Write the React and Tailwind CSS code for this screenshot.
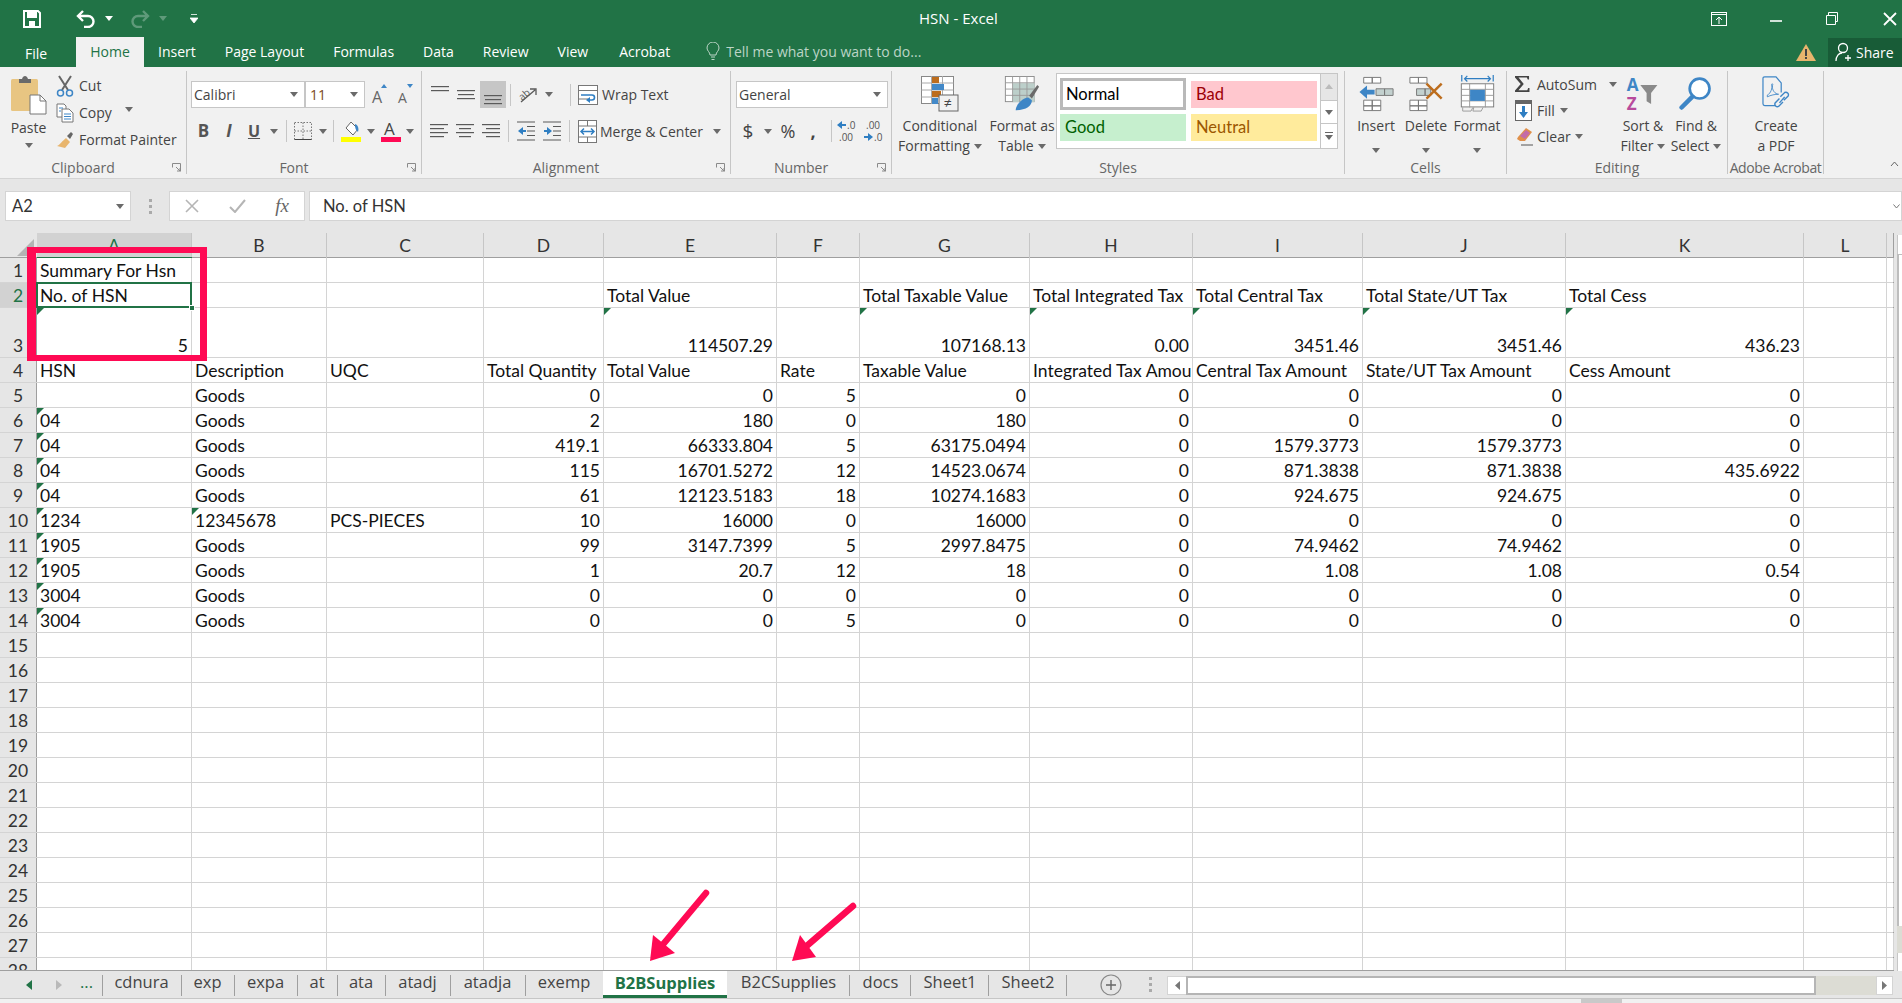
import React from 'react';

const G = '#217346';
const Caret = ({ c = '#6a6a6a' }) => (
  <svg width="8" height="5" viewBox="0 0 8 5" className="shrink-0"><path d="M0 0h8L4 5z" fill={c} /></svg>
);
const Slot = ({ w, children }) => <div className={`${w} h-full flex items-center justify-center shrink-0`}>{children}</div>;
const VSep = () => <div className="w-px h-[22px] bg-[#c6c6c6] shrink-0" />;

const Lines = ({ kind = 'left' }) => {
  const rows = [[0, 18], [kind === 'left' ? 0 : kind === 'center' ? 3 : 4, kind === 'left' ? 14 : kind === 'center' ? 15 : 18], [0, 18], [kind === 'left' ? 0 : kind === 'center' ? 3 : 4, kind === 'left' ? 14 : kind === 'center' ? 15 : 18]];
  return (
    <svg width="18" height="14" viewBox="0 0 18 14">
      {rows.map((r, i) => <rect key={i} x={r[0]} y={i * 4} width={r[1] - r[0]} height="1.2" fill="#5a5a5a" />)}
    </svg>
  );
};
const VAlign = ({ pos }) => {
  const ys = pos === 'top' ? [2, 6] : pos === 'mid' ? [6, 10, 14] : [11, 15, 19];
  return (
    <svg width="20" height="22" viewBox="0 0 20 22">
      {ys.map((y, i) => <rect key={y} x={i === 1 && pos !== 'top' ? 2 : 1} y={y} width={i === 1 && pos !== 'top' ? 16 : 18} height="1.2" fill="#5a5a5a" />)}
    </svg>
  );
};

const Scissors = () => (
  <svg width="18" height="22" viewBox="0 0 18 22">
    <path d="M3 1l9 14M15 1L6 15" stroke="#666" strokeWidth="2" fill="none" />
    <circle cx="4.5" cy="18" r="3" fill="none" stroke="#3e86c6" strokeWidth="1.5" />
    <circle cx="13.5" cy="18" r="3" fill="none" stroke="#3e86c6" strokeWidth="1.5" />
  </svg>
);
const CopyIco = () => (
  <svg width="18" height="20" viewBox="0 0 18 20">
    <path d="M1 1h7l2 2v11H1z" fill="#fff" stroke="#777" />
    <path d="M6 6h7l4 4v9H6z" fill="#fff" stroke="#777" />
    <path d="M3 5h4M3 8h2M8 11h7M8 13.5h7M8 16h7" stroke="#3e86c6" />
  </svg>
);
const Painter = () => (
  <svg width="18" height="18" viewBox="0 0 18 18">
    <path d="M10 7l4 4-5 6-8-2c3-1 5-5 9-8z" fill="#e8b56d" />
    <path d="M11 5l4-4 2 2-3 5z" fill="#666" />
  </svg>
);
const PasteIco = () => (
  <svg width="36" height="40" viewBox="0 0 36 40">
    <rect x="0" y="4" width="27" height="32" rx="1.5" fill="#e8c582" />
    <path d="M8 4h3c1-4 5-4 6 0h3v4H8z" fill="#6a6a6a" />
    <path d="M19 20h10l6 6v13H19z" fill="#fff" stroke="#777" />
    <path d="M29 20v6h6" fill="none" stroke="#777" />
  </svg>
);
const Wrap = () => (
  <svg width="20" height="20" viewBox="0 0 20 20">
    <rect x=".5" y=".5" width="19" height="19" fill="#fff" stroke="#777" />
    <path d="M.5 5.5h19M.5 14h10" stroke="#777" />
    <path d="M3 10h11a2.500 2.500 0 0 1 0 5h-3" stroke="#2f7ec2" strokeWidth="1.6" fill="none" />
    <path d="M12 12v6l-4-3z" fill="#2f7ec2" />
  </svg>
);
const Merge = () => (
  <svg width="19" height="23" viewBox="0 0 19 23">
    <rect x=".5" y=".5" width="18" height="22" fill="#fff" stroke="#777" />
    <path d="M.5 6h18M.5 17h18M9.500 .5V6M9.500 17v5.500" stroke="#777" />
    <path d="M3 11.500h13M6 8.500l-3 3 3 3M13 8.500l3 3-3 3" stroke="#2f7ec2" strokeWidth="1.5" fill="none" />
  </svg>
);
const Indent = ({ rev }) => (
  <svg width="18" height="20" viewBox="0 0 18 20">
    <path d="M0 1h18M0 19h18M10 5.500h8M10 10h8M10 14.500h8" stroke="#5a5a5a" strokeWidth="1.2" />
    {rev ? <path d="M1 10l5-4v3h3v2H6v3z" fill="#2f7ec2" /> : <path d="M9 10L4 6v3H1v2h3v3z" fill="#2f7ec2" />}
  </svg>
);
const Orient = () => (
  <svg width="20" height="20" viewBox="0 0 20 20">
    <text x="1" y="12" fontSize="10" fill="#5a5a5a" transform="rotate(-40 8 10)" fontFamily="Open Sans">ab</text>
    <path d="M3 17L17 5M12 4h6v6" stroke="#5a5a5a" strokeWidth="1.3" fill="none" />
  </svg>
);
const Dec = ({ up }) => (
  <svg width="22" height="24" viewBox="0 0 22 24">
    {up ? <>
      <path d="M1 6l5-4v3h4v2H6v3z" fill="#2f7ec2" />
      <text x="11" y="10" fontSize="10" fill="#555" fontFamily="Open Sans">.0</text>
      <text x="3" y="22" fontSize="10" fill="#555" fontFamily="Open Sans">.00</text>
    </> : <>
      <text x="4" y="10" fontSize="10" fill="#555" fontFamily="Open Sans">.00</text>
      <path d="M11 18l-5-4v3H2v2h4v3z" fill="#2f7ec2" />
      <text x="12" y="22" fontSize="10" fill="#555" fontFamily="Open Sans">.0</text>
    </>}
  </svg>
);
const CondFmt = () => (
  <svg width="38" height="36" viewBox="0 0 38 36">
    <rect x=".5" y=".5" width="32" height="27" fill="#fff" stroke="#888" />
    <path d="M.5 7h32M.5 14h32M.5 21h32M10.500 0v28M21.500 0v28" stroke="#aaa" />
    <rect x="11" y="1" width="7" height="6" fill="#bd6d1d" />
    <rect x="11" y="8" width="12" height="6" fill="#4389c8" />
    <rect x="11" y="15" width="9" height="6" fill="#bd6d1d" />
    <rect x="11" y="22" width="6" height="6" fill="#4389c8" />
    <rect x="18" y="19" width="19" height="16" fill="#f1f1f1" stroke="#666" />
    <text x="23" y="32" fontSize="14" fill="#444" fontFamily="Open Sans">≠</text>
  </svg>
);
const FmtTable = () => (
  <svg width="36" height="36" viewBox="0 0 38 40">
    <rect x=".5" y=".5" width="32" height="28" fill="#fff" stroke="#888" />
    <rect x="9" y="8" width="24" height="21" fill="#bccfca" />
    <path d="M.5 7.500h32M.5 14.500h32M.5 21.500h32M8.500 0v29M16.500 0v29M24.500 0v29" stroke="#999" />
    <path d="M27 22L36 10l2 2-8 13z" fill="#6a6a6a" />
    <path d="M12 38c0-6 8-14 14-14l4 3c0 6-6 11-18 11z" fill="#3e86c6" />
  </svg>
);
const InsertIco = () => (
  <svg width="35" height="36" viewBox="0 0 36 38">
    <g fill="#fff" stroke="#777"><path d="M4.500 1.500h9v6h-9zM13.500 1.500h9v6h-9zM4.500 25.500h9v6h-9zM13.500 25.500h9v6h-9zM4.500 31.500h9v5h-9zM13.500 31.500h9v5h-9z" /></g>
    <g fill="#c3d1cf" stroke="#777"><path d="M17.500 13.500h9v7h-9zM26.500 13.500h9v7h-9z" /></g>
    <path d="M0 17l8-7v4.500h8v5H8V24z" fill="#3e86c6" />
  </svg>
);
const DeleteIco = () => (
  <svg width="35" height="36" viewBox="0 0 36 38">
    <g fill="#fff" stroke="#777"><path d="M.5 1.500h9v6h-9zM9.500 1.500h9v6h-9zM.5 25.500h9v6h-9zM9.500 25.500h9v6h-9zM.5 31.500h9v5h-9zM9.500 31.500h9v5h-9z" /></g>
    <g fill="#c3d1cf" stroke="#777"><path d="M7.500 13.500h9v7h-9zM16.500 13.500h6v7h-6z" /></g>
    <path d="M18 8l16 16M34 8L18 24" stroke="#bd6d1d" strokeWidth="2.600" />
  </svg>
);
const FormatIco = () => (
  <svg width="35" height="37" viewBox="0 0 36 40">
    <path d="M4 4h28M7 1l-3 3 3 3M29 1l3 3-3 3M1 0v7M35 0v7" stroke="#2f7ec2" strokeWidth="1.3" fill="none" />
    <rect x=".5" y="9.500" width="35" height="25" fill="#fff" stroke="#777" />
    <path d="M.5 15.500h35M.5 22h35M.5 28h35M9.500 9v26M26.500 9v26" stroke="#999" />
    <rect x="10" y="16" width="16" height="12" fill="#3e86c6" />
    <path d="M2 35v4h9l2-4M14 35l-1 4h9l2-4" fill="none" stroke="#999" />
  </svg>
);
const Sigma = () => (
  <svg width="17" height="18" viewBox="0 0 17 18"><path d="M0 0h16v4h-1.500l-1-2.500H4l6 7.500-6 7h10l1-2.500H16.500V18H0v-1.500L6.500 9 0 1.500z" fill="#444" /></svg>
);
const FillIco = () => (
  <svg width="17" height="21" viewBox="0 0 17 21">
    <rect x=".5" y=".5" width="16" height="20" fill="#fff" stroke="#666" />
    <rect x="0" y="0" width="17" height="4" fill="#666" />
    <path d="M7 6h3v6h3l-4.500 6L4 12h3z" fill="#2f7ec2" />
  </svg>
);
const ClearIco = () => (
  <svg width="18" height="19" viewBox="0 0 18 19">
    <path d="M3 10l8-9 6 4-7 9H5l-3-2z" fill="#e0904a" />
    <path d="M5 9l6-6 4 3-5 6z" fill="#c36ca8" />
    <path d="M6 18h12" stroke="#555" />
  </svg>
);
const SortIco = () => (
  <svg width="36" height="36" viewBox="0 0 36 40">
    <text x="0" y="17" fontSize="19" fontWeight="700" fill="#3e86c6" fontFamily="Open Sans">A</text>
    <text x="0" y="38" fontSize="19" fontWeight="700" fill="#b84a9c" fontFamily="Open Sans">Z</text>
    <path d="M15 10h19l-7 9v12l-5-3v-9z" fill="#8a8a8a" />
  </svg>
);
const FindIco = () => (
  <svg width="34" height="36" viewBox="0 0 36 40">
    <circle cx="22" cy="14" r="11" fill="#fff" stroke="#3e86c6" strokeWidth="3" />
    <path d="M14 23L2 35" stroke="#3e86c6" strokeWidth="5" strokeLinecap="round" />
  </svg>
);
const PdfIco = () => (
  <svg width="30" height="33" viewBox="0 0 32 38" className="mb-[3px]">
    <path d="M1 3q0-2 2-2h13l6 7v11M1 3v29q0 2 2 2h12" fill="none" stroke="#3e86c6" strokeWidth="1.4" />
    <path d="M6 22c4-2 6-8 5-12 0-2 2-1 1 1-1 5 3 10 7 10-4 0-9 1-13 3z" fill="none" stroke="#3e86c6" />
    <path d="M21 24l5-5a3 3 0 0 1 4 4l-5 5M24 30l-5 5a3 3 0 0 1-4-4l5-5M20 31l6-7" fill="none" stroke="#3e86c6" strokeWidth="1.600" />
  </svg>
);
const Launcher = () => (
  <svg width="9" height="9" viewBox="0 0 9 9" className="shrink-0"><path d="M.5.5h8v8M.5.5v4M4 4l4 4M5 8h3V5" fill="none" stroke="#8a8a8a" /></svg>
);

const Group = ({ w, label, launch, labelClass = '', children }) => (
  <div className={`${w} h-[103px] mt-[4px] border-r border-[#c6c6c6] flex flex-col shrink-0`}>
    <div className="h-[90px]">{children}</div>
    <div className={`h-[13px] relative flex items-center justify-center text-[#666] text-[14px] leading-none whitespace-nowrap ${launch ? 'pr-[20px]' : ''} ${labelClass}`}>
      {label}
      {launch && <div className="absolute right-[5px] top-[2px]"><Launcher /></div>}
    </div>
  </div>
);
const BigBtn = ({ w, icon, l1, l2, caret }) => (
  <div className={`${w} flex flex-col items-center shrink-0 leading-none`}>
    <div className="h-[41px] flex items-end justify-center">{icon}</div>
    <div className="mt-[4px] h-[20px] flex items-center whitespace-nowrap">{l1}</div>
    <div className="h-[20px] flex items-center gap-[4px] whitespace-nowrap">{l2}{caret && <Caret />}</div>
  </div>
);
const Box = ({ w, children, caret }) => (
  <div className={`${w} h-[27px] bg-white border border-[#c6c6c6] flex items-center justify-between pl-[2px] pr-[6px] shrink-0`}>
    <span>{children}</span>{caret && <Caret />}
  </div>
);

const TABS = [
  ['cdnura', 'w-[79px]'], ['exp', 'w-[53px]'], ['expa', 'w-[63px]'], ['at', 'w-[40px]'], ['ata', 'w-[48px]'],
  ['atadj', 'w-[65px]'], ['atadja', 'w-[75px]'], ['exemp', 'w-[78px]'],
];
const TABS2 = [['B2CSupplies', 'w-[123px]'], ['docs', 'w-[61px]'], ['Sheet1', 'w-[78px]'], ['Sheet2', 'w-[78px]']];
const COLS = ['A', 'B', 'C', 'D', 'E', 'F', 'G', 'H', 'I', 'J', 'K', 'L', ''];
const rowGrid = 'grid grid-cols-[37px_155px_135px_157px_120px_173px_83px_170px_163px_170px_203px_238px_83px_7px]';

const L = (t, m) => ({ t, m });
const R = (t, m) => ({ t, r: true, m });
const blank = {};
const dataRow = (a, b, c, vals) => [a, L(b, b === '12345678'), L(c), ...vals.map((v) => R(v))];
const ROWS = {
  1: [L('Summary For Hsn')],
  2: [L('No. of HSN'), blank, blank, blank, L('Total Value'), blank, L('Total Taxable Value'), L('Total Integrated Tax'), L('Total Central Tax'), L('Total State/UT Tax'), L('Total Cess')],
  3: [R('5', true), blank, blank, blank, R('114507.29', true), blank, R('107168.13', true), R('0.00', true), R('3451.46', true), R('3451.46', true), R('436.23', true)],
  4: [L('HSN'), L('Description'), L('UQC'), L('Total Quantity'), L('Total Value'), L('Rate'), L('Taxable Value'), L('Integrated Tax Amount'), L('Central Tax Amount'), L('State/UT Tax Amount'), L('Cess Amount')],
  5: dataRow(L(''), 'Goods', '', ['0', '0', '5', '0', '0', '0', '0', '0']),
  6: dataRow(L('04', true), 'Goods', '', ['2', '180', '0', '180', '0', '0', '0', '0']),
  7: dataRow(L('04', true), 'Goods', '', ['419.1', '66333.804', '5', '63175.0494', '0', '1579.3773', '1579.3773', '0']),
  8: dataRow(L('04', true), 'Goods', '', ['115', '16701.5272', '12', '14523.0674', '0', '871.3838', '871.3838', '435.6922']),
  9: dataRow(L('04', true), 'Goods', '', ['61', '12123.5183', '18', '10274.1683', '0', '924.675', '924.675', '0']),
  10: dataRow(L('1234', true), '12345678', 'PCS-PIECES', ['10', '16000', '0', '16000', '0', '0', '0', '0']),
  11: dataRow(L('1905', true), 'Goods', '', ['99', '3147.7399', '5', '2997.8475', '0', '74.9462', '74.9462', '0']),
  12: dataRow(L('1905', true), 'Goods', '', ['1', '20.7', '12', '18', '0', '1.08', '1.08', '0.54']),
  13: dataRow(L('3004', true), 'Goods', '', ['0', '0', '0', '0', '0', '0', '0', '0']),
  14: dataRow(L('3004', true), 'Goods', '', ['0', '0', '5', '0', '0', '0', '0', '0']),
};
const nums = Array.from({ length: 28 }, (_, i) => i + 1);

const Cell = ({ c }) => (
  <div className={`relative h-full border-r border-[#d4d4d4] overflow-hidden flex items-end whitespace-nowrap pl-[3px] pr-[3px] leading-[22px] ${c && c.r ? 'justify-end' : ''}`}>
    {c && c.m && <svg width="7" height="7" viewBox="0 0 7 7" className="absolute left-0 top-0"><path d="M0 0h7L0 7z" fill={G} /></svg>}
    {c && c.t}
  </div>
);

export default function App() {
  return (
    <div className="relative w-[1902px] h-[1003px] overflow-hidden flex flex-col bg-[#f1f1f1] font-['Open_Sans',sans-serif] text-[14px] text-[#444]">
      {/* Title bar */}
      <div className="h-[37px] bg-[#217346] flex items-center shrink-0 text-white">
        <div className="w-[919px] flex items-center h-full pl-[23px] shrink-0">
          <svg width="18" height="18" viewBox="0 0 18 18"><path d="M1 1h14l2 2v14H1z" fill="none" stroke="#fff" strokeWidth="2" /><rect x="4" y="2" width="10" height="6" fill="#fff" /><rect x="6" y="11" width="6" height="5" fill="#fff" /></svg>
          <svg className="ml-[35px]" width="20" height="18" viewBox="0 0 20 18"><path d="M7 1L2 6l5 5M2 6h10a5.500 5.500 0 0 1 0 11H8" fill="none" stroke="#fff" strokeWidth="2.400" /></svg>
          <div className="ml-[9px]"><Caret c="#fff" /></div>
          <svg className="ml-[17px]" width="20" height="18" viewBox="0 0 20 18"><path d="M13 1l5 5-5 5M18 6H8a5.500 5.500 0 0 0 0 11h4" fill="none" stroke="#5f9a7a" strokeWidth="2.400" /></svg>
          <div className="ml-[9px]"><Caret c="#5f9a7a" /></div>
          <svg className="ml-[23px]" width="8" height="9" viewBox="0 0 8 9"><path d="M1 .5h6M0 4h8L4 9z" stroke="#fff" fill="#fff" strokeWidth=".8" /></svg>
        </div>
        <span className="text-[15px] whitespace-nowrap">HSN - Excel</span>
        <div className="ml-auto flex items-center gap-[41px] pr-[4px]">
          <svg width="16" height="14" viewBox="0 0 16 14"><rect x=".5" y=".5" width="15" height="13" fill="none" stroke="#fff" /><path d="M1 2.500h14M8 12V5M5 8l3-3 3 3" stroke="#fff" fill="none" /></svg>
          <svg width="16" height="14" viewBox="0 0 16 14"><path d="M2 9h12" stroke="#fff" strokeWidth="1.600" /></svg>
          <svg width="16" height="14" viewBox="0 0 16 14"><path d="M3.500 3V.5h9v9H10M1.500 3.500h9v9h-9z" fill="none" stroke="#fff" /></svg>
          <svg width="16" height="14" viewBox="0 0 14 14"><path d="M1 1l12 12M13 1L1 13" stroke="#fff" strokeWidth="1.800" /></svg>
        </div>
      </div>
      {/* Ribbon tabs */}
      <div className="h-[30px] bg-[#217346] flex items-stretch shrink-0 text-white text-[14px]">
        <div className="w-[76px] flex items-center justify-center pt-[2px] pr-[4px]">File</div>
        <div className="w-[68px] flex items-center justify-center bg-[#f1f1f1] text-[#217346] pb-[2px]">Home</div>
        <div className="pl-[14px] pb-[2px] flex items-center gap-[29px] whitespace-nowrap">
          <span>Insert</span><span>Page Layout</span><span>Formulas</span><span>Data</span><span>Review</span><span>View</span><span className="ml-[2px]">Acrobat</span>
        </div>
        <div className="ml-[36px] pb-[2px] flex items-center gap-[6px] text-[#bcd5c7] whitespace-nowrap">
          <svg width="14" height="19" viewBox="0 0 14 19"><path d="M4 13c0-3-3-4-3-7a6 6 0 0 1 12 0c0 3-3 4-3 7zM5 15h4M5.500 17.500h3" fill="none" stroke="#bcd5c7" /></svg>
          <span>Tell me what you want to do...</span>
        </div>
        <div className="ml-auto flex items-center">
          <svg width="20" height="17" viewBox="0 0 20 17"><path d="M10 0l10 17H0z" fill="#e8b56d" /><path d="M9 5h2v7H9zM9 13h2v2H9z" fill="#444" /></svg>
          <div className="ml-[12px] w-[74px] h-[29px] bg-[#185c37] flex items-center pl-[7px] gap-[3px]">
            <svg width="18" height="20" viewBox="0 0 18 20"><circle cx="8" cy="6" r="4.500" fill="none" stroke="#fff" strokeWidth="1.300" /><path d="M1 19c0-5 3-8 6-8M13 13v6M10 16h6" fill="none" stroke="#fff" strokeWidth="1.300" /></svg>
            <span>Share</span>
          </div>
        </div>
      </div>
      {/* Ribbon */}
      <div className="h-[112px] border-b border-[#d4d4d4] flex shrink-0 items-start">
        <Group w="w-[187px]" label="Clipboard" launch>
          <div className="flex h-full">
            <div className="w-[56px] flex flex-col items-center pt-[4px] pl-[1px]">
              <PasteIco />
              <div className="mt-[3px] leading-[20px]">Paste</div>
              <div className="mt-[5px]"><Caret /></div>
            </div>
            <div className="flex flex-col pt-[1px]">
              <div className="h-[27px] flex items-center gap-[5px]"><Scissors /><span>Cut</span></div>
              <div className="h-[27px] flex items-center gap-[5px]"><CopyIco /><span>Copy</span><span className="ml-[8px] -mt-[6px]"><Caret /></span></div>
              <div className="h-[27px] flex items-center gap-[5px] whitespace-nowrap"><Painter /><span>Format Painter</span></div>
            </div>
          </div>
        </Group>
        <Group w="w-[235px]" label="Font" launch>
          <div className="pl-[4px] pt-[10px] flex items-center">
            <Box w="w-[114px]" caret><span className="text-[#444]">Calibri</span></Box>
            <Box w="w-[60px]" caret><span className="pl-[2px] text-[#7c4a1e]">11</span></Box>
            <svg className="ml-[6px]" width="18" height="22" viewBox="0 0 18 22"><text x="1" y="19" fontSize="16" fill="#666" fontFamily="Open Sans">A</text><path d="M10 4l3-4 3 4z" fill="#3e86c6" /></svg>
            <svg className="ml-[8px]" width="18" height="22" viewBox="0 0 18 22"><text x="1" y="19" fontSize="14" fill="#666" fontFamily="Open Sans">A</text><path d="M10 0l3 4 3-4z" fill="#3e86c6" /></svg>
          </div>
          <div className="mt-[9px] pl-[4px] h-[28px] flex items-center text-[#555]">
            <Slot w="w-[25px]"><span className="font-bold text-[17px]">B</span></Slot>
            <Slot w="w-[26px]"><span className="italic font-bold text-[17px]">I</span></Slot>
            <Slot w="w-[24px]"><span className="underline font-bold text-[16px]">U</span></Slot>
            <Slot w="w-[16px]"><Caret /></Slot>
            <div className="ml-[4px]"><VSep /></div>
            <Slot w="w-[32px]"><svg width="18" height="18" viewBox="0 0 18 18"><path d="M.5.5h17v17H.5zM9 .5v17M.5 9h17" fill="none" stroke="#777" strokeDasharray="1.500 1.500" /><path d="M.5 17.500h17" stroke="#444" /></svg></Slot>
            <Slot w="w-[8px]"><Caret /></Slot>
            <div className="ml-[6px]"><VSep /></div>
            <Slot w="w-[34px]"><svg width="22" height="22" viewBox="0 0 22 22"><path d="M6 8l5-6 7 7-5 6z" fill="#fff" stroke="#666" /><path d="M15 4c3 1 4 4 3 8-2-2-3-3-3-8z" fill="#3e86c6" /><rect x="1" y="17" width="20" height="5" fill="#ffff00" /></svg></Slot>
            <Slot w="w-[6px]"><Caret /></Slot>
            <Slot w="w-[34px]"><svg width="20" height="22" viewBox="0 0 20 22"><text x="3" y="15" fontSize="17" fill="#444" fontFamily="Open Sans">A</text><rect x="0" y="17" width="20" height="5" fill="#ff0a54" /></svg></Slot>
            <Slot w="w-[4px]"><Caret /></Slot>
          </div>
        </Group>
        <Group w="w-[309px]" label="Alignment" launch>
          <div className="pt-[10px] pl-[7px] flex items-center h-[37px]">
            <Slot w="w-[22px]"><VAlign pos="top" /></Slot>
            <Slot w="w-[26px] ml-[2px]"><VAlign pos="mid" /></Slot>
            <div className="w-[26px] h-[27px] ml-[1px] bg-[#c6c6c6] flex items-center justify-center"><VAlign pos="bot" /></div>
            <div className="ml-[4px]"><VSep /></div>
            <Slot w="w-[34px]"><Orient /></Slot>
            <Slot w="w-[8px]"><Caret /></Slot>
            <div className="ml-[17px]"><VSep /></div>
            <div className="ml-[7px] flex items-center gap-[4px] whitespace-nowrap"><Wrap /><span>Wrap Text</span></div>
          </div>
          <div className="mt-[9px] pl-[8px] flex items-center h-[28px]">
            <Slot w="w-[18px]"><Lines kind="left" /></Slot>
            <Slot w="w-[18px] ml-[8px]"><Lines kind="center" /></Slot>
            <Slot w="w-[18px] ml-[8px]"><Lines kind="right" /></Slot>
            <div className="ml-[8px]"><VSep /></div>
            <Slot w="w-[18px] ml-[8px]"><Indent rev /></Slot>
            <Slot w="w-[18px] ml-[8px]"><Indent /></Slot>
            <div className="ml-[8px]"><VSep /></div>
            <div className="ml-[8px] flex items-center gap-[3px] whitespace-nowrap"><Merge /><span>Merge &amp; Center</span><span className="ml-[7px]"><Caret /></span></div>
          </div>
        </Group>
        <Group w="w-[161px]" label="Number" launch>
          <div className="pl-[5px] pt-[10px]"><Box w="w-[152px]" caret>General</Box></div>
          <div className="mt-[9px] pl-[7px] h-[28px] flex items-center">
            <Slot w="w-[20px]"><span className="text-[19px]">$</span></Slot>
            <Slot w="w-[20px]"><Caret /></Slot>
            <Slot w="w-[20px]"><span className="text-[18px]">%</span></Slot>
            <Slot w="w-[30px]"><span className="text-[18px] font-bold">,</span></Slot>
            <div className="ml-[3px]"><VSep /></div>
            <Slot w="w-[30px]"><Dec up /></Slot>
            <Slot w="w-[22px]"><Dec /></Slot>
          </div>
        </Group>
        <Group w="w-[453px]" label="Styles">
          <div className="flex items-start">
            <BigBtn w="w-[84px] ml-[6px]" icon={<CondFmt />} l1="Conditional" l2="Formatting" caret />
            <BigBtn w="w-[80px]" icon={<FmtTable />} l1="Format as" l2="Table" caret />
            <div className="-ml-[6px] mt-[2px] w-[282px] h-[76px] bg-white border border-[#c6c6c6] flex shrink-0">
              <div className="flex-1 pl-[3px] pt-[7px] grid grid-cols-[126px_126px] gap-x-[5px] gap-y-[4px] content-start text-[16.500px] font-['Lato',sans-serif]">
                <div className="h-[32px] -mb-[3px] -mt-[3px] border-[3px] border-[#b9b9b9] flex items-center pl-[3px] text-black">Normal</div>
                <div className="h-[27px] bg-[#ffc7ce] text-[#9c0006] flex items-center pl-[5px]">Bad</div>
                <div className="h-[27px] bg-[#c6efce] text-[#006100] flex items-center pl-[5px] mt-[2px]">Good</div>
                <div className="h-[27px] bg-[#ffeb9c] text-[#9c5700] flex items-center pl-[5px] mt-[2px]">Neutral</div>
              </div>
              <div className="w-[17px] border-l border-[#c6c6c6] flex flex-col shrink-0">
                <div className="h-[26px] bg-[#e6e6e6] flex items-center justify-center rotate-180"><Caret c="#bbb" /></div>
                <div className="h-[24px] border-y border-[#c6c6c6] flex items-center justify-center"><Caret /></div>
                <div className="flex-1 flex flex-col items-center justify-center gap-[2px]"><div className="w-[8px] h-px bg-[#666]" /><Caret /></div>
              </div>
            </div>
          </div>
        </Group>
        <Group w="w-[162px]" label="Cells">
          <div className="flex items-start pl-[6px]">
            <BigBtn w="w-[50px]" icon={<InsertIco />} l1="Insert" l2={<span className="mt-[8px]"><Caret /></span>} />
            <BigBtn w="w-[50px]" icon={<DeleteIco />} l1="Delete" l2={<span className="mt-[8px]"><Caret /></span>} />
            <BigBtn w="w-[52px]" icon={<FormatIco />} l1="Format" l2={<span className="mt-[8px]"><Caret /></span>} />
          </div>
        </Group>
        <Group w="w-[221px]" label="Editing">
          <div className="flex items-start">
            <div className="w-[110px] pl-[8px] flex flex-col shrink-0">
              <div className="h-[26px] flex items-center gap-[7px] whitespace-nowrap"><Sigma /><span>AutoSum</span><span className="ml-[5px]"><Caret /></span></div>
              <div className="h-[26px] flex items-center gap-[5px]"><FillIco /><span>Fill</span><Caret /></div>
              <div className="h-[27px] flex items-center gap-[4px]"><ClearIco /><span>Clear</span><Caret /></div>
            </div>
            <BigBtn w="w-[52px]" icon={<SortIco />} l1="Sort &" l2="Filter" caret />
            <BigBtn w="w-[54px]" icon={<FindIco />} l1="Find &" l2="Select" caret />
          </div>
        </Group>
        <Group w="w-[96px]" label="Adobe Acrobat" labelClass="tracking-[-0.4px]">
          <BigBtn w="w-[96px]" icon={<PdfIco />} l1="Create" l2="a PDF" />
        </Group>
        <div className="ml-auto mr-[3px] mt-[94px]"><svg width="9" height="6" viewBox="0 0 9 6"><path d="M1 5l3.500-4L8 5" stroke="#666" fill="none" /></svg></div>
      </div>
      {/* Formula bar */}
      <div className="h-[54px] bg-[#e6e6e6] flex items-start pt-[12px] shrink-0">
        <div className="ml-[5px] w-[126px] h-[30px] bg-white border border-[#d4d4d4] flex items-center justify-between pl-[6px] pr-[6px] font-['Lato',sans-serif] text-[16.500px] text-[#333]">A2<Caret /></div>
        <div className="w-[38px] h-[30px] flex flex-col items-center justify-center gap-[3px]">
          {[0, 1, 2].map((i) => <div key={i} className="w-[3px] h-[3px] bg-[#aaa]" />)}
        </div>
        <div className="w-[136px] h-[30px] bg-white border border-[#d4d4d4] flex items-center shrink-0">
          <Slot w="w-[44px]"><svg width="14" height="14" viewBox="0 0 14 14"><path d="M1 1l12 12M13 1L1 13" stroke="#b5b5b5" strokeWidth="1.600" /></svg></Slot>
          <Slot w="w-[46px]"><svg width="17" height="14" viewBox="0 0 17 14"><path d="M1 8l5 5L16 1" stroke="#b5b5b5" strokeWidth="2" fill="none" /></svg></Slot>
          <Slot w="w-[44px]"><span className="italic font-['Liberation_Serif',serif] text-[19px] text-[#666]">fx</span></Slot>
        </div>
        <div className="ml-[4px] flex-1 h-[30px] bg-white border border-[#d4d4d4] flex items-center pl-[13px] font-['Lato',sans-serif] text-[16.500px] text-[#333] justify-between pr-[1px]">
          No. of HSN
          <svg width="7" height="5" viewBox="0 0 7 5"><path d="M.5.5L3.500 4 6.500.5" stroke="#777" fill="none" /></svg>
        </div>
      </div>
      {/* Sheet */}
      <div className="relative h-[738px] flex bg-[#e6e6e6] shrink-0 font-['Lato',sans-serif] text-[17.500px] text-[#111] overflow-hidden">
        <div className="w-[1894px] h-full flex flex-col overflow-hidden border-b border-[#9f9f9f] shrink-0">
          <div className={`${rowGrid} h-[25px] border-b border-[#9f9f9f] shrink-0 text-[#333]`}>
            <div className="flex items-end justify-end pr-[3px] pb-[3px]"><svg width="17" height="17" viewBox="0 0 17 17"><path d="M17 0v17H0z" fill="#b4b4b4" /></svg></div>
            {COLS.map((n, i) => (
              <div key={i} className={`flex items-center justify-center border-r border-[#c6c6c6] ${i === 0 ? 'bg-[#d2d2d2] text-[#217346]' : ''}`}>{n}</div>
            ))}
          </div>
          {nums.map((n) => {
            const cells = ROWS[n] || [];
            return (
              <div key={n} className={`${rowGrid} ${n === 3 ? 'h-[50px]' : 'h-[25px]'} border-b border-[#d4d4d4] shrink-0 bg-white`}>
                <div className={`h-full flex items-end justify-center leading-[22px] border-r border-[#9f9f9f] -mb-px text-[#333] ${n === 2 ? 'bg-[#d2d2d2] text-[#217346]' : 'bg-[#e6e6e6]'}`}>{n}</div>
                {Array.from({ length: 13 }, (_, i) => <Cell key={i} c={cells[i]} />)}
              </div>
            );
          })}
        </div>
        <div className="border-l border-[#9f9f9f] -ml-px h-full" />
        <div className="ml-[3px] flex-1 flex flex-col pt-[2px]">
          <div className="h-[19px] bg-white border-l border-[#c6c6c6]" />
          <div className="flex-1 bg-white border-l-2 border-t border-[#bdbdbd]" />
          <div className="h-[27px] bg-[#dcdcd4]" />
          <div className="h-[18px] bg-white border-l border-[#c6c6c6]" />
        </div>
        {/* selection */}
        <div className="absolute left-[37px] top-[24px] w-[155px] h-[1px] bg-[#217346]" />
        <div className="absolute left-[36px] top-[49px] w-[156px] h-[26px] border-2 border-[#217346]" />
        <div className="absolute left-[189px] top-[72px] w-[6px] h-[6px] bg-[#217346] border border-white" />
        {/* annotation */}
        <div className="absolute left-[27px] top-[14px] w-[180px] h-[114px] border-l-[9px] border-r-[7px] border-y-[6px] border-[#ff0a54]" />
      </div>
      {/* Tab bar */}
      <div className="h-[28px] bg-[#e6e6e6] flex items-stretch shrink-0 border-b border-[#c6c6c6] text-[16.500px]">
        <div className="w-[102px] flex items-center shrink-0 text-[#217346]">
          <svg className="ml-[26px]" width="6" height="10" viewBox="0 0 6 10"><path d="M6 0v10L0 5z" fill="#217346" /></svg>
          <svg className="ml-[24px]" width="6" height="10" viewBox="0 0 6 10"><path d="M0 0v10l6-5z" fill="#b9b9b9" /></svg>
          <span className="ml-[18px] -mt-[4px]">...</span>
        </div>
        {TABS.map(([t, w]) => (
          <div key={t} className={`${w} flex items-center justify-center shrink-0 relative`}>
            <span className="-mt-[4px]">{t}</span>
            <div className="absolute left-0 top-[4px] w-px h-[21px] bg-[#9f9f9f]" />
          </div>
        ))}
        <div className="w-[124px] h-[27px] bg-white border-b-[3px] border-[#217346] flex items-center justify-center font-bold text-[#217346] shrink-0 -mb-px">B2BSupplies</div>
        {TABS2.map(([t, w]) => (
          <div key={t} className={`${w} flex items-center justify-center shrink-0 relative`}>
            <span className="-mt-[4px]">{t}</span>
            <div className="absolute right-0 top-[4px] w-px h-[21px] bg-[#9f9f9f]" />
          </div>
        ))}
        <div className="ml-[33px] flex items-center">
          <svg width="22" height="22" viewBox="0 0 22 22"><circle cx="11" cy="11" r="10" fill="none" stroke="#888" strokeWidth="1.200" /><path d="M11 6v10M6 11h10" stroke="#666" strokeWidth="1.400" /></svg>
        </div>
        <div className="ml-[27px] flex flex-col justify-center gap-[3px]">
          {[0, 1, 2].map((i) => <div key={i} className="w-[3px] h-[3px] bg-[#aaa]" />)}
        </div>
        <div className="ml-[15px] w-[726px] h-[19px] mt-[5px] flex shrink-0">
          <div className="w-[19px] bg-white border-y border-l border-[#d4d4d4] flex items-center justify-center"><svg width="5" height="9" viewBox="0 0 5 9"><path d="M5 0v9L0 4.500z" fill="#777" /></svg></div>
          <div className="w-[630px] bg-white border-2 border-[#b5b5b5]" />
          <div className="w-[60px] bg-[#dcdcd4]" />
          <div className="w-[17px] bg-white border border-[#d4d4d4] flex items-center justify-center"><svg width="5" height="9" viewBox="0 0 5 9"><path d="M0 0v9l5-4.500z" fill="#777" /></svg></div>
        </div>
      </div>
      {/* Status bar */}
      <div className="flex-1 bg-[#f1f1f1] pl-[1581px]"><div className="w-[41px] h-full bg-[#c9c9c9]" /></div>
      {/* Arrows */}
      <svg className="absolute left-0 top-0 pointer-events-none" width="1902" height="1003" viewBox="0 0 1902 1003">
        <path d="M706 893L660 948" stroke="#ff0a54" strokeWidth="6.500" strokeLinecap="round" />
        <path d="M650 961L653 935L675 953z" fill="#ff0a54" />
        <path d="M853 906L802 950" stroke="#ff0a54" strokeWidth="6.500" strokeLinecap="round" />
        <path d="M792 961L800 935L816 957z" fill="#ff0a54" />
      </svg>
    </div>
  );
}
